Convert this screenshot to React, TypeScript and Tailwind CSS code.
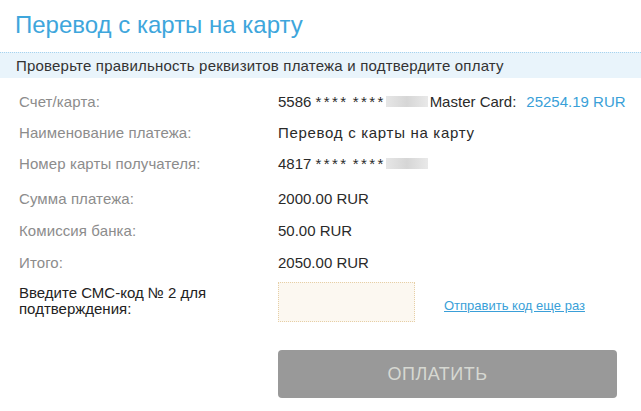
const Blur = ({ w }: { w: number }) => (
  <span
    className="inline-block h-[11px] bg-gradient-to-r from-[#e6e6e6] via-[#d6d6d6] to-[#e9e9e9] align-middle"
    style={{ width: w }}
  />
);

const Masked = ({ first }: { first: string }) => (
  <span className="whitespace-pre">
    {first} <span className="tracking-[2.4px]">****</span>{" "}
    <span className="tracking-[2.4px]">****</span>
  </span>
);

const Row = ({
  label,
  children,
  tall,
}: {
  label: string;
  children: React.ReactNode;
  tall?: boolean;
}) => (
  <div className={`flex items-center ${tall ? "h-[32px]" : "h-[31px]"}`}>
    <div className="w-[259px] shrink-0 text-[#8c8c8c] tracking-[0.1px]">{label}</div>
    <div className="flex items-center text-[#2a2a2a]">{children}</div>
  </div>
);

export default function App() {
  return (
    <div className="w-[641px] h-[411px] bg-white font-['Liberation_Sans',Arial,sans-serif] text-[15px] leading-none overflow-hidden">
      <div className="h-[52px] pl-[15px] pt-[11px]">
        <h1 className="text-[24px] leading-[28px] text-[#3ea6dc]">
          Перевод с карты на карту
        </h1>
      </div>
      <div className="h-[26px] border-t border-dotted border-[#a6d3ef] bg-[#e9f4fb] pl-[16px] flex items-center text-[#333] tracking-[0.2px]">
        Проверьте правильность реквизитов платежа и подтвердите оплату
      </div>

      <div className="pl-[19px] pt-[8px]">
        <Row label="Счет/карта:">
          <Masked first="5586" />
          <Blur w={42} />
          <span className="ml-[2px]">Master Card:</span>
          <span className="ml-[10px] text-[#3a9fd8]">25254.19 RUR</span>
        </Row>
        <Row label="Наименование платежа:">
          <span className="tracking-[0.7px]">Перевод с карты на карту</span>
        </Row>
        <Row label="Номер карты получателя:">
          <Masked first="4817" />
          <Blur w={42} />
        </Row>
        <div className="mt-[3px]">
          <Row label="Сумма платежа:" tall>
            2000.00 RUR
          </Row>
          <Row label="Комиссия банка:" tall>
            50.00 RUR
          </Row>
          <Row label="Итого:" tall>
            2050.00 RUR
          </Row>
        </div>

        <div className="mt-[4px] flex">
          <div className="w-[259px] shrink-0 pt-[3px] leading-[16px] text-[#222]">
            Введите СМС-код № 2 для
            <br />
            подтверждения:
          </div>
          <input
            className="w-[137px] h-[40px] border border-dotted border-[#e6cfa6] bg-[#fcf8f1] outline-none"
            type="text"
          />
          <a
            href="#"
            className="ml-[29px] mt-[17px] text-[13px] text-[#3a9fd8] underline"
          >
            Отправить код еще раз
          </a>
        </div>

        <div className="mt-[28px] pl-[259px]">
          <button className="w-[339px] h-[48px] rounded-[4px] bg-[#999999] text-[18px] tracking-[0.5px] text-[#d6d8d2] pr-[20px]">
            ОПЛАТИТЬ
          </button>
        </div>
      </div>
    </div>
  );
}
